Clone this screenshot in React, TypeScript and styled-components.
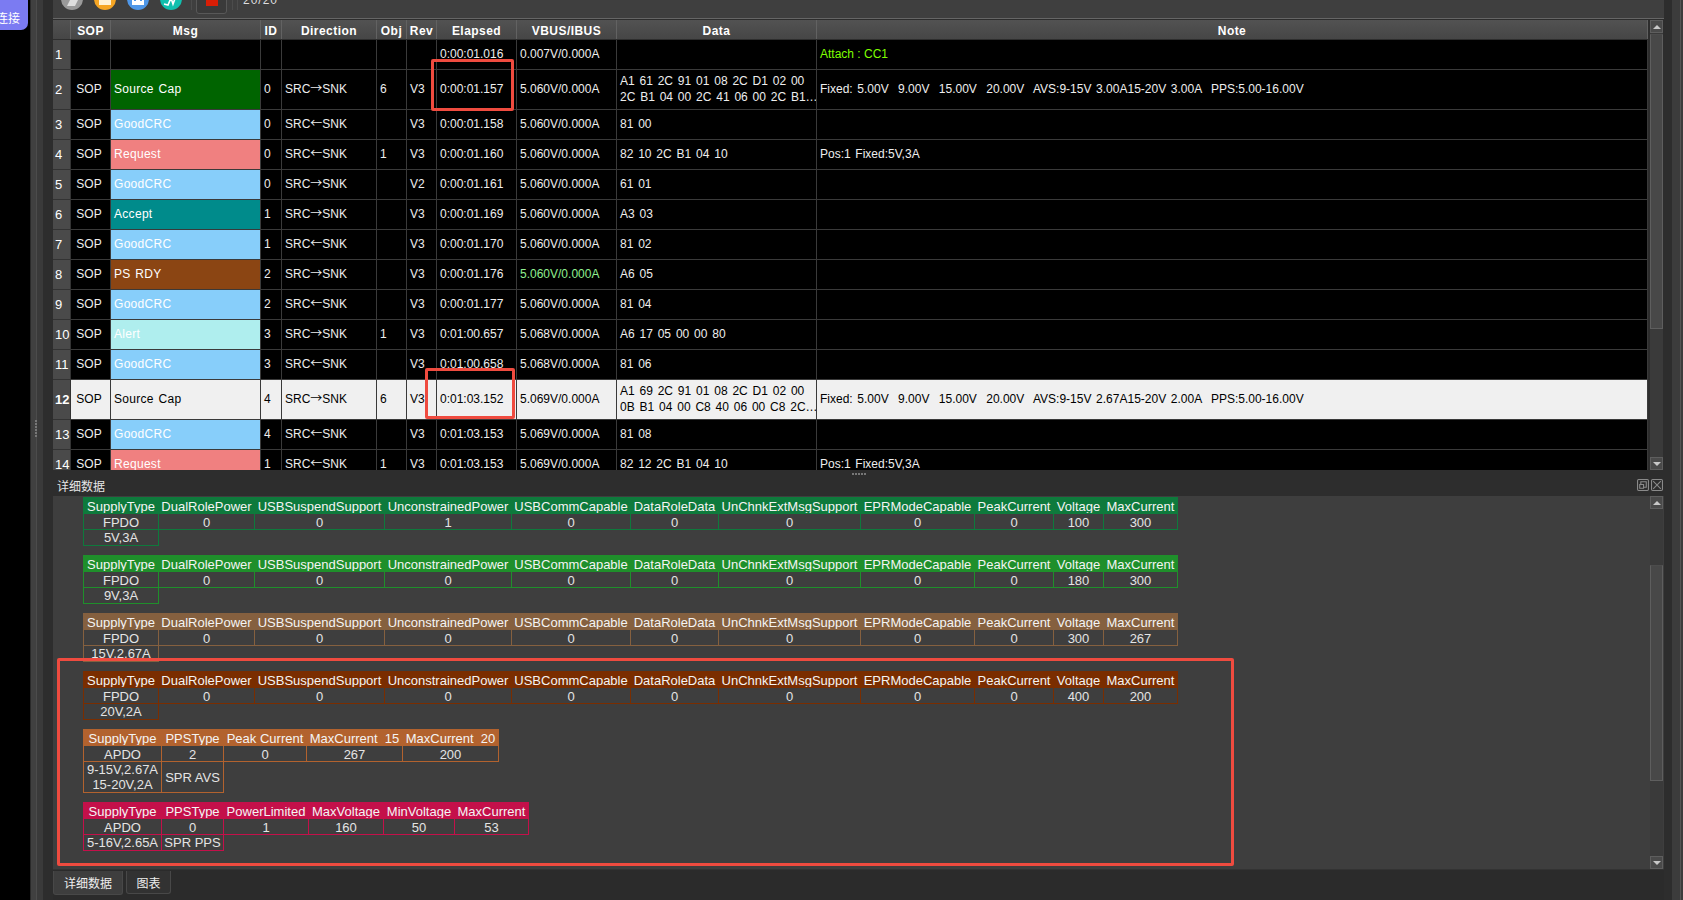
import React, { FC } from 'react';
import styled, { createGlobalStyle } from 'styled-components';

const GlobalStyle = createGlobalStyle`
    html, body {
        margin: 0;
        padding: 0;
        background: #000;
    }
    * {
        box-sizing: border-box;
    }
`;

const Page = styled.div`
    position: relative;
    display: flex;
    width: 1683px;
    height: 900px;
    overflow: hidden;
    font-family: "Liberation Sans", "Noto Sans CJK SC", sans-serif;
    font-size: 12px;
    color: #eee;
`;

const Rail = styled.div`
    width: 30px;
    flex: none;
    background: #000;
`;

const ConnectButton = styled.div`
    display: flex;
    justify-content: flex-end;
    align-items: center;
    width: 28px;
    height: 30px;
    padding: 4px 8px 0 0;
    overflow: hidden;
    white-space: nowrap;
    font-size: 12px;
    color: #fff;
    background: #7b7bf2;
    border-bottom-right-radius: 7px;
`;

const Splitter = styled.div`
    width: 7px;
    flex: none;
    padding: 420px 0 0 4px;
    background: #404040;
    border-left: 1px solid #2a2a2a;
    border-right: 1px solid #4c4c4c;
`;

const SplitterGrip = styled.div`
    width: 2px;
    height: 17px;
    background: repeating-linear-gradient(to bottom, #777 0 2px, transparent 2px 3px);
`;

const Gutter = styled.div<{ $width: number; $color: string }>`
    width: ${p => p.$width}px;
    flex: none;
    background: ${p => p.$color};
`;

const Main = styled.div`
    display: flex;
    flex-direction: column;
    width: 1611px;
    flex: none;
    background: #2d2d2d;
`;

const Toolbar = styled.div`
    display: flex;
    align-items: flex-end;
    height: 19px;
    padding: 0 0 8px 8px;
    overflow: hidden;
    background: #3f3f3f;
    border-bottom: 1px solid #666;
`;

const ToolIcon = styled.svg`
    display: block;
    flex: none;
    width: 22px;
    height: 22px;
    margin-right: 11px;
`;

const ToolDivider = styled.div`
    flex: none;
    width: 1px;
    height: 22px;
    margin-right: 4px;
    background: #4c4c4c;
`;

const StopButton = styled.div`
    display: flex;
    justify-content: center;
    flex: none;
    width: 31px;
    height: 24px;
    margin: 0 5px -4px 0;
    border: 1px solid #585858;
    border-radius: 3px;
    background: #3a3a3a;
`;

const StopSquare = styled.div`
    width: 12px;
    height: 15px;
    background: #d81e06;
`;

const Counter = styled.div`
    margin: 0 0 3px 1px;
    letter-spacing: 1px;
    font-size: 12px;
    line-height: 14px;
    color: #ddd;
`;

const TableDock = styled.div`
    display: flex;
    height: 451px;
    padding: 1px 1px 0 0;
    background: #2d2d2d;
`;

const TableView = styled.div`
    display: flex;
    flex-direction: column;
    width: 1595px;
    margin-right: 2px;
    overflow: hidden;
    background: #000;
`;

const HeaderRow = styled.div`
    display: flex;
    flex: none;
    height: 20px;
    background: linear-gradient(#525252, #464646);
    border-bottom: 1px solid #2e2e2e;
`;

const HeadCell = styled.div<{ $width: number }>`
    display: flex;
    align-items: center;
    justify-content: center;
    width: ${p => p.$width}px;
    flex: none;
    padding-top: 2px;
    border-right: 1px solid #626262;
    font-weight: 700;
    letter-spacing: 0.45px;
    color: #fff;
`;

const DataRow = styled.div<{ $height: number; $selected?: boolean }>`
    display: flex;
    flex: none;
    height: ${p => p.$height}px;
    background: ${p => (p.$selected ? '#f0f0f0' : '#000')};
    color: ${p => (p.$selected ? '#000' : '#eee')};
`;

const RowNumber = styled.div<{ $selected?: boolean }>`
    display: flex;
    align-items: center;
    width: 18px;
    flex: none;
    padding-left: 2px;
    background: #4a4a4a;
    border-bottom: 1px solid #333;
    border-right: 1px solid #333;
    font-size: 13px;
    font-weight: ${p => (p.$selected ? 700 : 400)};
    color: #fff;
`;

const Cell = styled.div<{ $width: number; $fill?: string; $center?: boolean; $color?: string }>`
    display: flex;
    align-items: center;
    justify-content: ${p => (p.$center ? 'center' : 'flex-start')};
    width: ${p => p.$width}px;
    flex: none;
    padding: 0 3px 1px ${p => (p.$center ? 0 : 3)}px;
    overflow: hidden;
    white-space: pre;
    background: ${p => p.$fill || 'transparent'};
    border-right: 1px solid #3a3a3a;
    border-bottom: 1px solid #3a3a3a;
    line-height: 16px;
    color: ${p => p.$color || (p.$fill ? '#fff' : 'inherit')};
`;

const Arrow = styled.span`
    font-family: "Noto Sans CJK SC", sans-serif;
    font-size: 12px;
    line-height: 0;
`;

const MsgText = styled.span`
    letter-spacing: 0.3px;
    word-spacing: 1px;
`;

const HexText = styled.span`
    word-spacing: 1.5px;
`;

const NoteText = styled.span`
    word-spacing: 1.35px;
`;

const ScrollBar = styled.div`
    display: flex;
    flex-direction: column;
    width: 13px;
    flex: none;
    background: #3a3a3a;
`;

const ScrollButton = styled.div<{ $down?: boolean }>`
    display: flex;
    align-items: center;
    justify-content: center;
    height: 13px;
    flex: none;
    background: #4a4a4a;
    border: 1px solid #5e5e5e;
    &::before {
        content: '';
        border-left: 4px solid transparent;
        border-right: 4px solid transparent;
        border-${p => (p.$down ? 'top' : 'bottom')}: 4px solid #c8c8c8;
    }
`;

const ScrollTrack = styled.div<{ $lead: number }>`
    flex: 1;
    padding-top: ${p => p.$lead}px;
`;

const ScrollThumb = styled.div<{ $height: number }>`
    height: ${p => p.$height}px;
    background: #484848;
    border: 1px solid #5e5e5e;
    border-top-color: #4c4c4c;
`;

const DockTitle = styled.div`
    position: relative;
    display: flex;
    align-items: center;
    flex: none;
    height: 26px;
    padding: 4px 1px 0 4px;
    background: #2d2d2d;
    color: #e6e6e6;
`;

const DockGrip = styled.div`
    position: absolute;
    top: 3px;
    left: 799px;
    width: 15px;
    height: 2px;
    background: repeating-linear-gradient(to right, #777 0 2px, transparent 2px 3px);
`;

const DockLabel = styled.div`
    flex: 1;
`;

const DockIcon = styled.svg`
    display: block;
    flex: none;
    width: 12px;
    height: 12px;
    margin-left: 2px;
`;

const DetailDock = styled.div`
    display: flex;
    height: 373px;
    flex: none;
    padding-right: 1px;
    background: #3e3e3e;
`;

const DetailScroll = styled.div`
    width: 1597px;
    flex: none;
    padding: 1px 0 0 30px;
    overflow: hidden;
`;

const DetailGrid = styled.table<{ $tone: string }>`
    border-collapse: collapse;
    table-layout: fixed;
    margin-bottom: 9px;
    font-size: 13px;
    line-height: 15px;
    color: #e4e4e4;
    td, th {
        height: 16px;
        padding: 0;
        border: 1px solid ${p => p.$tone};
        font-weight: 400;
        text-align: center;
        white-space: pre;
        overflow: hidden;
    }
    th, tr:first-child td {
        padding-top: 2px;
        line-height: 13px;
    }
    th {
        background: ${p => p.$tone};
        color: #f4f4f4;
    }
`;

const TabBar = styled.div`
    display: flex;
    flex: 1;
    gap: 3px;
    padding-top: 1px;
    background: #2b2b2b;
    border-top: 1px solid #333;
`;

const Tab = styled.div<{ $active?: boolean }>`
    display: flex;
    align-items: center;
    justify-content: center;
    width: ${p => (p.$active ? 70 : 45)}px;
    height: ${p => (p.$active ? 24 : 23)}px;
    background: ${p => (p.$active ? '#3e3e3e' : '#323232')};
    border: 1px solid #484848;
    border-top: none;
    border-radius: 0 0 3px 3px;
    color: #eee;
`;

const Mark = styled.div<{ $x: number; $y: number; $w: number; $h: number }>`
    position: absolute;
    left: ${p => p.$x}px;
    top: ${p => p.$y}px;
    width: ${p => p.$w}px;
    height: ${p => p.$h}px;
    border: 3px solid #ef4b3f;
    border-radius: 2px;
`;

const COLS = [40, 150, 21, 95, 30, 30, 80, 100, 200, 831];
const HEADS = ['SOP', 'Msg', 'ID', 'Direction', 'Obj', 'Rev', 'Elapsed', 'VBUS/IBUS', 'Data', 'Note'];

const GREEN = '#006400';
const BLUE = '#87cefa';
const CORAL = '#f08080';
const CYAN = '#008b8b';
const BROWN = '#8b4513';
const PALE = '#afeeee';

const R = '\u2192';
const L = '\u2190';

type LogRow = {
    msg: string;
    fill?: string;
    id: string;
    dir: string;
    obj?: string;
    rev: string;
    at: string;
    vbus: string;
    hex: string;
    note?: string;
    tall?: boolean;
    selected?: boolean;
    bright?: boolean;
};

const NOTE_A = 'Fixed: 5.00V  9.00V  15.00V  20.00V  AVS:9-15V 3.00A15-20V 3.00A  PPS:5.00-16.00V';
const NOTE_B = 'Fixed: 5.00V  9.00V  15.00V  20.00V  AVS:9-15V 2.67A15-20V 2.00A  PPS:5.00-16.00V';
const NOTE_POS = 'Pos:1 Fixed:5V,3A';

const LOG: LogRow[] = [
    { msg: 'Source Cap', fill: GREEN, id: '0', dir: R, obj: '6', rev: 'V3', at: '0:00:01.157', vbus: '5.060V/0.000A', hex: 'A1 61 2C 91 01 08 2C D1 02 00\n2C B1 04 00 2C 41 06 00 2C B1\u2026', note: NOTE_A, tall: true },
    { msg: 'GoodCRC', fill: BLUE, id: '0', dir: L, rev: 'V3', at: '0:00:01.158', vbus: '5.060V/0.000A', hex: '81 00' },
    { msg: 'Request', fill: CORAL, id: '0', dir: L, obj: '1', rev: 'V3', at: '0:00:01.160', vbus: '5.060V/0.000A', hex: '82 10 2C B1 04 10', note: NOTE_POS },
    { msg: 'GoodCRC', fill: BLUE, id: '0', dir: R, rev: 'V2', at: '0:00:01.161', vbus: '5.060V/0.000A', hex: '61 01' },
    { msg: 'Accept', fill: CYAN, id: '1', dir: R, rev: 'V3', at: '0:00:01.169', vbus: '5.060V/0.000A', hex: 'A3 03' },
    { msg: 'GoodCRC', fill: BLUE, id: '1', dir: L, rev: 'V3', at: '0:00:01.170', vbus: '5.060V/0.000A', hex: '81 02' },
    { msg: 'PS RDY', fill: BROWN, id: '2', dir: R, rev: 'V3', at: '0:00:01.176', vbus: '5.060V/0.000A', hex: 'A6 05', bright: true },
    { msg: 'GoodCRC', fill: BLUE, id: '2', dir: L, rev: 'V3', at: '0:00:01.177', vbus: '5.060V/0.000A', hex: '81 04' },
    { msg: 'Alert', fill: PALE, id: '3', dir: R, obj: '1', rev: 'V3', at: '0:01:00.657', vbus: '5.068V/0.000A', hex: 'A6 17 05 00 00 80' },
    { msg: 'GoodCRC', fill: BLUE, id: '3', dir: L, rev: 'V3', at: '0:01:00.658', vbus: '5.068V/0.000A', hex: '81 06' },
    { msg: 'Source Cap', id: '4', dir: R, obj: '6', rev: 'V3', at: '0:01:03.152', vbus: '5.069V/0.000A', hex: 'A1 69 2C 91 01 08 2C D1 02 00\n0B B1 04 00 C8 40 06 00 C8 2C\u2026', note: NOTE_B, tall: true, selected: true },
    { msg: 'GoodCRC', fill: BLUE, id: '4', dir: L, rev: 'V3', at: '0:01:03.153', vbus: '5.069V/0.000A', hex: '81 08' },
    { msg: 'Request', fill: CORAL, id: '1', dir: L, obj: '1', rev: 'V3', at: '0:01:03.153', vbus: '5.069V/0.000A', hex: '82 12 2C B1 04 10', note: NOTE_POS },
];

const LogLine: FC<{ n: number; row: LogRow }> = ({ n, row }) => (
    <DataRow $height={row.tall ? 40 : 30} $selected={row.selected}>
        <RowNumber $selected={row.selected}>{n}</RowNumber>
        <Cell $width={COLS[0]} $center>SOP</Cell>
        <Cell $width={COLS[1]} $fill={row.fill}><MsgText>{row.msg}</MsgText></Cell>
        <Cell $width={COLS[2]}>{row.id}</Cell>
        <Cell $width={COLS[3]}><span>SRC<Arrow>{row.dir}</Arrow>SNK</span></Cell>
        <Cell $width={COLS[4]}>{row.obj}</Cell>
        <Cell $width={COLS[5]}>{row.rev}</Cell>
        <Cell $width={COLS[6]}>{row.at}</Cell>
        <Cell $width={COLS[7]} $color={row.bright ? '#90ee90' : undefined}>{row.vbus}</Cell>
        <Cell $width={COLS[8]}><HexText>{row.hex}</HexText></Cell>
        <Cell $width={COLS[9]}><NoteText>{row.note}</NoteText></Cell>
    </DataRow>
);

const FPDO_HEADS = ['SupplyType', 'DualRolePower', 'USBSuspendSupport', 'UnconstrainedPower', 'USBCommCapable', 'DataRoleData', 'UnChnkExtMsgSupport', 'EPRModeCapable', 'PeakCurrent', 'Voltage', 'MaxCurrent'];
const FPDO_WIDTHS = [75, 96, 130, 127, 119, 88, 142, 114, 79, 50, 74];

type Spec = {
    tone: string;
    heads: string[];
    widths: number[];
    values: string[];
    notes: string[];
};

const fpdo = (tone: string, unconstrained: string, voltage: string, current: string, note: string): Spec => ({
    tone,
    heads: FPDO_HEADS,
    widths: FPDO_WIDTHS,
    values: ['FPDO', '0', '0', unconstrained, '0', '0', '0', '0', '0', voltage, current],
    notes: [note],
});

const SPECS: Spec[] = [
    fpdo('#0e7a3c', '1', '100', '300', '5V,3A'),
    fpdo('#1f8f2b', '0', '180', '300', '9V,3A'),
    fpdo('#85603f', '0', '300', '267', '15V,2.67A'),
    fpdo('#7a2d00', '0', '400', '200', '20V,2A'),
    {
        tone: '#b2622e',
        heads: ['SupplyType', 'PPSType', 'Peak Current', 'MaxCurrent  15', 'MaxCurrent  20'],
        widths: [78, 62, 83, 96, 96],
        values: ['APDO', '2', '0', '267', '200'],
        notes: ['9-15V,2.67A\n15-20V,2A', 'SPR AVS'],
    },
    {
        tone: '#c4104a',
        heads: ['SupplyType', 'PPSType', 'PowerLimited', 'MaxVoltage', 'MinVoltage', 'MaxCurrent'],
        widths: [78, 62, 85, 75, 71, 74],
        values: ['APDO', '0', '1', '160', '50', '53'],
        notes: ['5-16V,2.65A', 'SPR PPS'],
    },
];

const DetailTable: FC<{ spec: Spec }> = ({ spec }) => (
    <DetailGrid $tone={spec.tone} style={{ width: spec.widths.reduce((a, b) => a + b, 0) }}>
        <colgroup>
            {spec.widths.map((w, i) => <col key={i} style={{ width: w }} />)}
        </colgroup>
        <thead>
            <tr>{spec.heads.map((h, i) => <th key={i}>{h}</th>)}</tr>
        </thead>
        <tbody>
            <tr>{spec.values.map((v, i) => <td key={i}>{v}</td>)}</tr>
            <tr>{spec.notes.map((v, i) => <td key={i}>{v}</td>)}</tr>
        </tbody>
    </DetailGrid>
);

const Scroller: FC<{ lead: number; thumb: number }> = ({ lead, thumb }) => (
    <ScrollBar>
        <ScrollButton />
        <ScrollTrack $lead={lead}><ScrollThumb $height={thumb} /></ScrollTrack>
        <ScrollButton $down />
    </ScrollBar>
);

export default function App() {
    return (
        <Page>
            <GlobalStyle />
            <Rail>
                <ConnectButton>连接</ConnectButton>
            </Rail>
            <Splitter><SplitterGrip /></Splitter>
            <Gutter $width={6} $color="#3a3a3a" />
            <Gutter $width={10} $color="#2d2d2d" />
            <Main>
                <Toolbar>
                    <ToolIcon viewBox="0 0 22 22">
                        <circle cx="11" cy="11" r="11" fill="#9a9a9a" />
                        <path d="M6 18h8l3-6H9z" fill="#dedede" />
                    </ToolIcon>
                    <ToolIcon viewBox="0 0 22 22">
                        <circle cx="11" cy="11" r="11" fill="#f5a524" />
                        <rect x="5" y="3" width="12" height="14" fill="#fff2d6" />
                    </ToolIcon>
                    <ToolIcon viewBox="0 0 22 22">
                        <circle cx="11" cy="11" r="11" fill="#4f97e8" />
                        <path d="M5 9v8h12V9h-2v4h-2V9h-4v4H7V9z" fill="#fff" />
                    </ToolIcon>
                    <ToolIcon viewBox="0 0 22 22" style={{ marginRight: 9 }}>
                        <circle cx="11" cy="11" r="11" fill="#11bfae" />
                        <path d="M4 16l4 1 3-7 2 6 3-8 3-1" fill="none" stroke="#fff" strokeWidth="1.6" />
                    </ToolIcon>
                    <ToolDivider />
                    <StopButton><StopSquare /></StopButton>
                    <ToolDivider />
                    <ToolDivider />
                    <Counter>20/20</Counter>
                </Toolbar>
                <TableDock>
                    <TableView>
                        <HeaderRow>
                            <HeadCell $width={18} />
                            {HEADS.map((h, i) => <HeadCell key={h} $width={COLS[i]}>{h}</HeadCell>)}
                        </HeaderRow>
                        <DataRow $height={30}>
                            <RowNumber>1</RowNumber>
                            {COLS.slice(0, 6).map((w, i) => <Cell key={i} $width={w} />)}
                            <Cell $width={COLS[6]}>0:00:01.016</Cell>
                            <Cell $width={COLS[7]}>0.007V/0.000A</Cell>
                            <Cell $width={COLS[8]} />
                            <Cell $width={COLS[9]} $color="#7fff00">Attach : CC1</Cell>
                        </DataRow>
                        {LOG.map((row, i) => <LogLine key={i} n={i + 2} row={row} />)}
                    </TableView>
                    <Scroller lead={1} thumb={295} />
                </TableDock>
                <DockTitle>
                    <DockGrip />
                    <DockLabel>详细数据</DockLabel>
                    <DockIcon viewBox="0 0 11 11" fill="none" stroke="#8a8a8a">
                        <rect x="0.5" y="0.5" width="10" height="10" rx="1" />
                        <path d="M3.5 5V2.5h5v5H6M2.5 5h3.5v3.5H2.5z" />
                    </DockIcon>
                    <DockIcon viewBox="0 0 11 11" fill="none" stroke="#8a8a8a">
                        <rect x="0.5" y="0.5" width="10" height="10" rx="1" />
                        <path d="M2 2l7 7M9 2l-7 7" />
                    </DockIcon>
                </DockTitle>
                <DetailDock>
                    <DetailScroll>
                        {SPECS.map((spec, i) => <DetailTable key={i} spec={spec} />)}
                    </DetailScroll>
                    <Scroller lead={56} thumb={216} />
                </DetailDock>
                <TabBar>
                    <Tab $active>详细数据</Tab>
                    <Tab>图表</Tab>
                </TabBar>
            </Main>
            <Gutter $width={8} $color="#2d2d2d" />
            <Gutter $width={8} $color="#3c3c3c" />
            <Gutter $width={1} $color="#555" />
            <Gutter $width={2} $color="#3c3c3c" />
            <Mark $x={431} $y={59} $w={83} $h={52} />
            <Mark $x={425} $y={368} $w={90} $h={51} />
            <Mark $x={57} $y={658} $w={1177} $h={208} />
        </Page>
    );
}
